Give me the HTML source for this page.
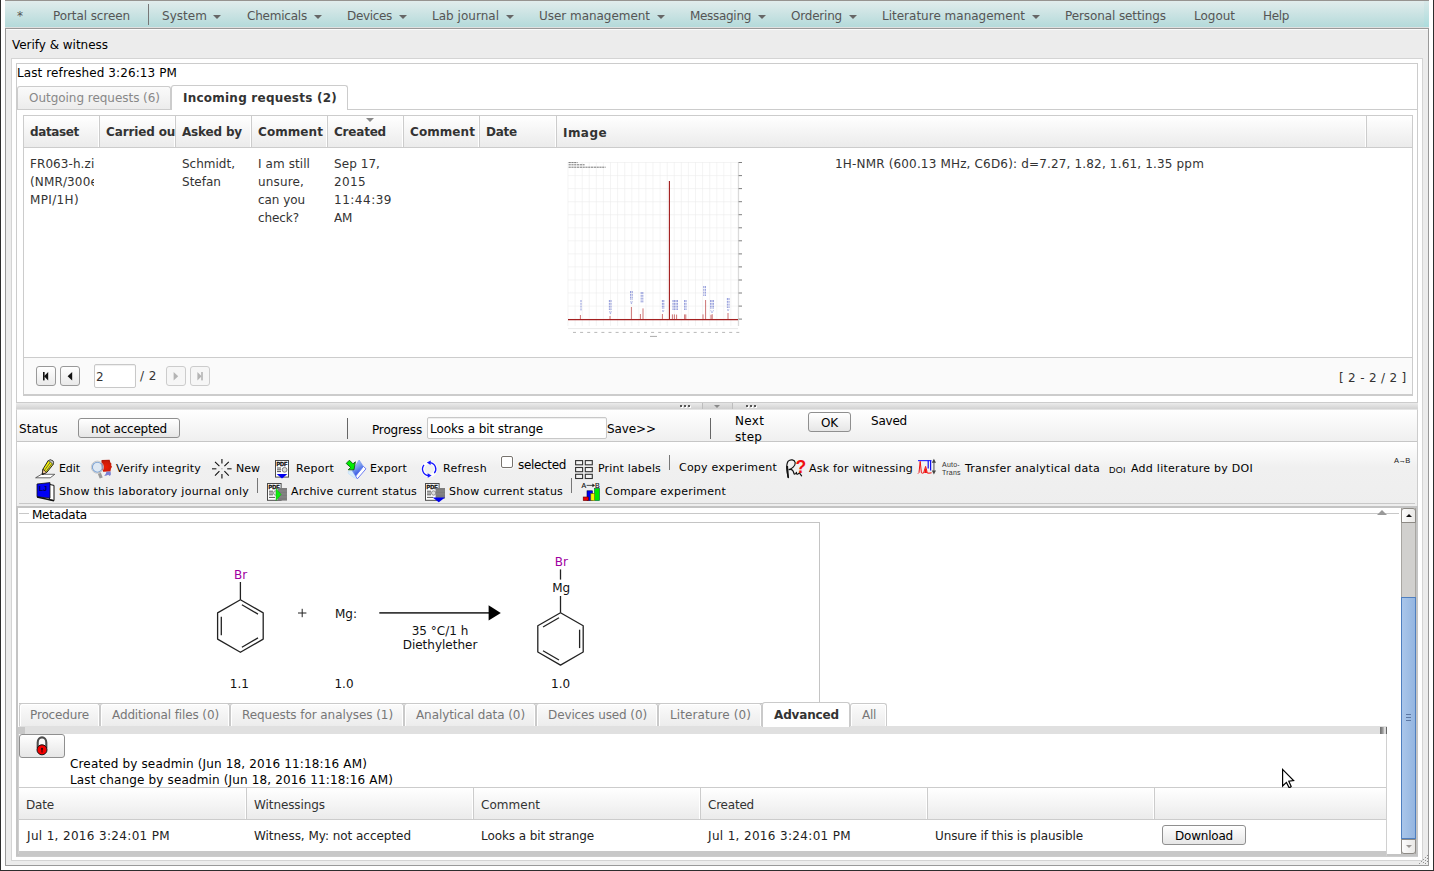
<!DOCTYPE html>
<html lang="en"><head>
<meta charset="utf-8">
<title>Verify &amp; witness</title>
<style>
html,body{margin:0;padding:0;}
body{width:1434px;height:871px;position:relative;overflow:hidden;background:#fff;
 font-family:"DejaVu Sans","Liberation Sans",sans-serif;font-size:12px;line-height:15px;color:#000;}
.a{position:absolute;}
.t{position:absolute;white-space:nowrap;line-height:15px;height:15px;}
svg{position:absolute;overflow:visible;}
/* frame */
#edgeL{left:0;top:0;width:1px;height:871px;background:#2d2d2d;}
#edgeR{left:1433px;top:0;width:1px;height:871px;background:#2d2d2d;}
#edgeB{left:0;top:870px;width:1434px;height:1px;background:#2d2d2d;}
#edgeT{left:5px;top:0;width:1424px;height:1px;background:#969390;}
/* menu */
#menu{left:5px;top:1px;width:1424px;height:26px;background:linear-gradient(#e1ecec,#b4dada);}
#menu .t{color:#555;top:8px;}
#menu .ar{position:absolute;top:14px;width:0;height:0;border-left:4px solid transparent;border-right:4px solid transparent;border-top:4px solid #666;}
#menuline{left:5px;top:27px;width:1424px;height:1px;background:#e0e0e0;}
/* main panel */
#main{left:5px;top:28px;width:1422px;height:836px;border:1px solid #999;background:#ececec;box-shadow:inset 0 1px 0 #fbfbfb;}
#cont{left:11px;top:58px;width:1410px;height:801px;border:1px solid #d4d4d4;background:#fff;}
#upper{left:16px;top:63px;width:1400px;height:338px;border:1px solid #ccc;background:#fff;}
#split{left:16px;top:403px;width:1402px;height:6px;background:linear-gradient(#ebebeb,#d2d2d2);}
#lower{left:16px;top:409px;width:1400px;height:446px;border:1px solid #ccc;border-top:1px solid #e4e4e4;background:#fff;}
/* tabs */
.tab{position:absolute;box-sizing:border-box;border:1px solid #ccc;border-bottom:none;border-radius:3px 3px 0 0;background:linear-gradient(#fafafa,#ececec);color:#888;white-space:nowrap;}
.tab.on{background:#fff;color:#333;font-weight:bold;}
.tab span{position:absolute;line-height:15px;}
/* grid */
#grid{left:23px;top:115px;width:1388px;height:279px;border:1px solid #ccc;background:#fff;}
#ghead{left:24px;top:116px;width:1388px;height:31px;background:linear-gradient(#fff,#ebebeb);border-bottom:1px solid #ccc;}
.hc{position:absolute;top:0;height:31px;border-right:1px solid #ccc;box-shadow:inset -1px 0 0 #fff;box-sizing:border-box;overflow:hidden;white-space:nowrap;font-weight:bold;color:#333;}
.hc span{position:absolute;left:6px;top:9px;line-height:15px;}
.ln{display:block;white-space:nowrap;}
.cell{position:absolute;overflow:hidden;white-space:nowrap;color:#333;line-height:18px;}
#pager{left:24px;top:357px;width:1388px;height:36px;border-top:1px solid #ccc;border-bottom:1px solid #ccc;background:#fafafa;}
.pb{position:absolute;box-sizing:border-box;width:20px;height:20px;border:1px solid #999;border-radius:3px;background:linear-gradient(#fff,#e9e9e9);}
.pb.dis{border-color:#ccc;background:#f6f6f6;}
.btn{position:absolute;box-sizing:border-box;border:1px solid #8f8f8f;border-radius:3px;background:linear-gradient(#fff,#e6e6e6);text-align:center;white-space:nowrap;}
.inp{position:absolute;box-sizing:border-box;border:1px solid #c8c8c8;border-radius:2px;background:#fff;box-shadow:inset 0 1px 1px #eee;white-space:nowrap;overflow:hidden;}
#status{left:17px;top:410px;width:1400px;height:31px;background:linear-gradient(#fff,#efefef);border-bottom:1px solid #c6c6c6;}
#tbar{left:17px;top:442px;width:1400px;height:64px;background:linear-gradient(#fff 0,#f0f0f0 40%,#eee 100%);}

#tbar .t{top:0}
.tb{position:absolute;white-space:nowrap;line-height:15px;height:15px;font-size:11px;letter-spacing:0.22px;}
.sep{position:absolute;width:1px;height:15px;background:#777;}
#scroll{left:18px;top:508px;width:1383px;height:346px;background:#fff;}
.tab2{position:absolute;box-sizing:border-box;top:703px;height:23px;border:1px solid #cacaca;border-bottom:none;border-radius:3px 3px 0 0;background:linear-gradient(#fbfbfb,#ececec);box-shadow:inset 1px 1px 0 #fff,inset -1px 0 0 #fff;color:#777;white-space:nowrap;}
.tab2 span{position:absolute;left:11px;top:4px;line-height:15px;}
.tab2.on{background:#fff;box-shadow:none;color:#333;font-weight:bold;top:702px;height:25px;}
.tab2.on span{top:5px}
.th2{position:absolute;top:0;height:31px;box-sizing:border-box;border-right:1px solid #ccc;box-shadow:inset -1px 0 0 #fff;color:#333;}
.th2 span{position:absolute;left:7px;top:10px;line-height:15px;white-space:nowrap;}
.td2{position:absolute;top:829px;line-height:15px;white-space:nowrap;color:#222;}
</style>
</head>
<body>
<div class="a" id="edgeL"></div><div class="a" id="edgeR"></div><div class="a" id="edgeB"></div><div class="a" id="edgeT"></div>

<div class="a" id="menu">
 <span class="t" style="left: 12px; letter-spacing: 0px;">*</span>
 <span class="t" style="left: 48px; letter-spacing: -0.091px;">Portal screen</span>
 <div class="a" style="left:143px;top:3px;width:1px;height:21px;background:#777"></div>
 <span class="t" style="left: 157px; letter-spacing: 0.042px;">System</span><i class="ar" style="left:208px"></i>
 <span class="t" style="left: 242px; letter-spacing: -0.215px;">Chemicals</span><i class="ar" style="left:309px"></i>
 <span class="t" style="left: 342px; letter-spacing: -0.328px;">Devices</span><i class="ar" style="left:394px"></i>
 <span class="t" style="left: 427px; letter-spacing: 0.02px;">Lab journal</span><i class="ar" style="left:501px"></i>
 <span class="t" style="left: 534px; letter-spacing: -0.037px;">User management</span><i class="ar" style="left:652px"></i>
 <span class="t" style="left: 685px; letter-spacing: -0.309px;">Messaging</span><i class="ar" style="left:753px"></i>
 <span class="t" style="left: 786px; letter-spacing: -0.209px;">Ordering</span><i class="ar" style="left:844px"></i>
 <span class="t" style="left: 877px; letter-spacing: 0.001px;">Literature management</span><i class="ar" style="left:1027px"></i>
 <span class="t" style="left: 1060px; letter-spacing: -0.099px;">Personal settings</span>
 <span class="t" style="left: 1189px; letter-spacing: -0.016px;">Logout</span>
 <span class="t" style="left: 1258px; letter-spacing: -0.34px;">Help</span>
 <div class="a" style="left:1419px;top:0;width:5px;height:26px;background:linear-gradient(#d8e8e8,#acdcdc)"></div>
</div>
<div class="a" id="menuline"></div>

<div class="a" id="main"></div>
<span class="t" style="left: 12px; top: 38px; letter-spacing: -0.023px;">Verify &amp; witness</span>
<div class="a" id="cont"></div>
<div class="a" id="upper"></div>
<div class="a" id="split"></div>
<div class="a" style="left:702px;top:403px;width:29px;height:6px;border-left:1px solid #bdbdbd;border-right:1px solid #bdbdbd;background:linear-gradient(#e4e4e4,#cfcfcf)"></div>
<div class="a" style="left:680px;top:405px;width:2px;height:2px;background:#555;box-shadow:4px 0 0 #555,8px 0 0 #555,1px 1px 0 #fff,5px 1px 0 #fff,9px 1px 0 #fff"></div>
<div class="a" style="left:746px;top:405px;width:2px;height:2px;background:#555;box-shadow:4px 0 0 #555,8px 0 0 #555,1px 1px 0 #fff,5px 1px 0 #fff,9px 1px 0 #fff"></div>
<div class="a" style="left:714px;top:405px;width:0;height:0;border-left:3.5px solid transparent;border-right:3.5px solid transparent;border-top:3.5px solid #888"></div>
<div class="a" id="lower"></div>

<!-- upper: refreshed + tabs -->
<span class="t" style="left: 17px; top: 66px; letter-spacing: 0.101px;">Last refreshed 3:26:13 PM</span>
<div class="a" style="left:17px;top:109px;width:1400px;height:1px;background:#ccc"></div>
<div class="tab" style="left:17px;top:86px;width:154px;height:23px"><span style="left: 11px; top: 4px; letter-spacing: -0.036px;">Outgoing requests (6)</span></div>
<div class="tab on" style="left:171px;top:85px;width:177px;height:25px"><span style="left: 11px; top: 5px; letter-spacing: 0.231px;">Incoming requests (2)</span></div>

<!-- grid -->
<div class="a" id="grid"></div>
<div class="a" id="ghead">
 <div class="hc" style="left:0;width:76px"><span style="letter-spacing: -0.364px;">dataset</span></div>
 <div class="hc" style="left:76px;width:76px"><span style="letter-spacing: -0.134px;">Carried out by</span></div>
 <div class="hc" style="left:152px;width:76px"><span style="letter-spacing: -0.176px;">Asked by</span></div>
 <div class="hc" style="left:228px;width:76px"><span style="letter-spacing: 0.074px;">Comment</span></div>
 <div class="hc" style="left:304px;width:76px"><span style="letter-spacing: -0.205px;">Created</span></div>
 <div class="hc" style="left:380px;width:76px"><span style="letter-spacing: 0.074px;">Comment</span></div>
 <div class="hc" style="left:456px;width:77px"><span style="letter-spacing: -0.234px;">Date</span></div>
 <div class="hc" style="left:533px;width:810px"><span style="top: 10px; letter-spacing: 0.441px;">Image</span></div>
</div>
<div class="a" style="left:366px;top:118px;width:0;height:0;border-left:4px solid transparent;border-right:4px solid transparent;border-top:4px solid #888"></div>

<div class="cell" style="left:30px;top:155px;width:64px"><span class="ln" style="letter-spacing: 0.077px;">FR063-h.zip</span><span class="ln" style="letter-spacing: 0.138px;">(NMR/300er</span><span class="ln" style="letter-spacing: 0.355px;">MPI/1H)</span></div>
<div class="cell" style="left:182px;top:155px;width:64px"><span class="ln" style="letter-spacing: 0.002px;">Schmidt,</span><span class="ln" style="letter-spacing: 0.018px;">Stefan</span></div>
<div class="cell" style="left:258px;top:155px;width:64px"><span class="ln" style="letter-spacing: 0.083px;">I am still</span><span class="ln" style="letter-spacing: 0.152px;">unsure,</span><span class="ln" style="letter-spacing: -0.06px;">can you</span><span class="ln" style="letter-spacing: -0.086px;">check?</span></div>
<div class="cell" style="left:334px;top:155px;width:66px"><span class="ln" style="letter-spacing: 0.069px;">Sep 17,</span><span class="ln" style="letter-spacing: 0.363px;">2015</span><span class="ln" style="letter-spacing: 0.512px;">11:44:39</span><span class="ln" style="letter-spacing: -0.281px;">AM</span></div>
<div class="cell" style="left:835px;top:155px;width:500px;letter-spacing:0.14px"><span class="ln" style="letter-spacing: 0.166px;">1H-NMR (600.13 MHz, C6D6): d=7.27, 1.82, 1.61, 1.35 ppm</span></div>

<svg style="left:567px;top:160px" width="180" height="180" viewBox="0 0 180 180">
<path d="M1.0 2 V166 M8.1 2 V166 M15.2 2 V166 M22.2 2 V166 M29.3 2 V166 M36.4 2 V166 M43.5 2 V166 M50.6 2 V166 M57.7 2 V166 M64.8 2 V166 M71.8 2 V166 M78.9 2 V166 M86.0 2 V166 M93.1 2 V166 M100.2 2 V166 M107.2 2 V166 M114.3 2 V166 M121.4 2 V166 M128.5 2 V166 M135.6 2 V166 M142.7 2 V166 M149.8 2 V166 M156.8 2 V166 M163.9 2 V166 M171.0 2 V166 M1 2.5 H171 M1 15.6 H171 M1 28.6 H171 M1 41.7 H171 M1 54.7 H171 M1 67.8 H171 M1 80.8 H171 M1 93.9 H171 M1 106.9 H171 M1 120.0 H171 M1 133.0 H171 M1 146.1 H171 M1 159.1 H171 " stroke="#ececec" stroke-width="0.6" fill="none"></path>
<path d="M171.6 2 V166" stroke="#c8c8c8" stroke-width="0.7"></path>
<path d="M171.6 2.5 H175 M171.6 15.6 H175 M171.6 28.6 H175 M171.6 41.7 H175 M171.6 54.7 H175 M171.6 67.8 H175 M171.6 80.8 H175 M171.6 93.9 H175 M171.6 106.9 H175 M171.6 120.0 H175 M171.6 133.0 H175 M171.6 146.1 H175 M171.6 159.1 H175 " stroke="#707070" stroke-width="0.9"></path>
<path d="M6.0 172.4 h3 M13.1 172.4 h3 M20.2 172.4 h3 M27.3 172.4 h3 M34.4 172.4 h3 M41.5 172.4 h3 M48.6 172.4 h3 M55.7 172.4 h3 M62.8 172.4 h3 M69.9 172.4 h3 M77.0 172.4 h3 M84.1 172.4 h3 M91.2 172.4 h3 M98.3 172.4 h3 M105.4 172.4 h3 M112.5 172.4 h3 M119.6 172.4 h3 M126.7 172.4 h3 M133.8 172.4 h3 M140.9 172.4 h3 M148.0 172.4 h3 M155.1 172.4 h3 M162.2 172.4 h3 M169.3 172.4 h3 " stroke="#b8b8b8" stroke-width="1"></path>
<path d="M83 176.4 h7" stroke="#aaa" stroke-width="1"></path>
<path d="M1.6 2.6 h9 M1.6 4.8 h16 M1.6 7.2 h37" stroke="#777" stroke-width="1" stroke-dasharray="2.2 0.6"></path>
<path d="M1 159.6 H171" stroke="#a42020" stroke-width="1.25"></path>
<path d="M1 168.6 H171" stroke="#e0e0e0" stroke-width="0.7"></path>
<path d="M102.4 159 V21" stroke="#a01818" stroke-width="1.1"></path>
<path d="M13.4 159 V155.0 M43.0 159 V156.0 M64.4 159 V147.0 M73.4 159 V154.0 M76.0 159 V148.4 M95.4 159 V154.0 M105.4 159 V154.4 M107.4 159 V154.4 M109.6 159 V154.6 M117.6 159 V154.4 M118.8 159 V154.4 M136.0 159 V154.4 M138.6 159 V140.0 M144.0 159 V154.8 M145.2 159 V154.2 M161.0 159 V153.0 " stroke="#c05050" stroke-width="0.8"></path>
<path d="M14.0 140 V151 M42.4 140 V150 M44.0 140 V150 M63.6 131 V140 M65.2 131 V140 M74.2 132 V143 M75.8 132 V143 M95.4 140 V149 M96.8 140 V149 M106.0 140 V150 M107.4 140 V150 M109.0 140 V150 M110.4 140 V150 M117.6 140 V150 M119.0 140 V150 M136.8 126 V136 M138.4 126 V136 M143.6 140 V149 M145.0 140 V149 M146.4 140 V149 M160.4 138 V148 M162.0 138 V148 " stroke="#5a68c8" stroke-width="0.9" stroke-dasharray="2 0.8" opacity="0.75"></path>
<path d="M42.4 151 L43.4 154 L44.4 151 M63.6 141 L64.4 144 L65.4 141 M95.4 150 L96 152 L97 150 M143.6 150 L145 153 L146.6 150 M160.4 149 L161 151 L162 149" stroke="#7a86d4" stroke-width="0.6" fill="none" opacity="0.8"></path>
</svg>

<div class="a" id="pager">
 <div class="pb" style="left:12px;top:8px"></div>
 <div class="pb" style="left:36px;top:8px"></div>
 <div class="inp" style="left:70px;top:6px;width:42px;height:24px"><span class="t" style="left: 1px; top: 5px; color: rgb(51, 51, 51); letter-spacing: 0.359px;">2</span></div>
 <span class="t" style="left: 116px; top: 11px; color: rgb(51, 51, 51); letter-spacing: 0.5px;">/ 2</span>
 <div class="pb dis" style="left:142px;top:8px"></div>
 <div class="pb dis" style="left:166px;top:8px"></div>
<svg style="left:12px;top:8px" width="20" height="20" viewBox="0 0 20 20"><rect x="7" y="6" width="1.6" height="8.4" fill="#111"></rect><path d="M12.2 6 L8 10.2 L12.2 14.4 Z" fill="#111"></path></svg>
 <svg style="left:36px;top:8px" width="20" height="20" viewBox="0 0 20 20"><path d="M12.2 6 L7.6 10.2 L12.2 14.4 Z" fill="#111"></path></svg>
 <svg style="left:142px;top:8px" width="20" height="20" viewBox="0 0 20 20"><path d="M7.6 6 L12.2 10.2 L7.6 14.4 Z" fill="#b4b4b4"></path></svg>
 <svg style="left:166px;top:8px" width="20" height="20" viewBox="0 0 20 20"><path d="M7.4 6 L11.6 10.2 L7.4 14.4 Z" fill="#b4b4b4"></path><rect x="11.2" y="6" width="1.6" height="8.4" fill="#b4b4b4"></rect></svg>
 <span class="t nols" style="left:1315px;top:13px;color:#333;letter-spacing:0.3px">[ 2 - 2 / 2 ]</span>
</div>

<!-- status row -->
<div class="a" id="status"></div>
<span class="t" style="left: 19px; top: 422px; letter-spacing: 0.125px;">Status</span>
<div class="btn" style="left: 78px; top: 418px; width: 102px; height: 20px; line-height: 20px; letter-spacing: -0.228px;">not accepted</div>
<div class="a" style="left:347px;top:418px;width:1px;height:21px;background:#666"></div>
<span class="t" style="left: 372px; top: 423px; letter-spacing: -0.152px;">Progress</span>
<div class="inp" style="left:427px;top:417px;width:180px;height:22px"><span class="t" style="left: 2px; top: 4px; letter-spacing: -0.088px;">Looks a bit strange</span></div>
<span class="t" style="left: 607px; top: 422px; letter-spacing: -0.096px;">Save&gt;&gt;</span>
<div class="a" style="left:710px;top:418px;width:1px;height:21px;background:#666"></div>
<span class="t" style="left: 735px; top: 413px; line-height: 16px; white-space: normal; width: 40px; height: 32px; z-index: 3; letter-spacing: 0.34px;">Next step</span>
<div class="btn" style="left: 808px; top: 412px; width: 43px; height: 20px; line-height: 20px; letter-spacing: -0.164px;">OK</div>
<span class="t" style="left: 871px; top: 414px; letter-spacing: -0.216px;">Saved</span>

<!-- toolbar -->
<div class="a" id="tbar"></div>

<!-- toolbar row 1 -->
<span class="tb" style="left: 59px; top: 461px; letter-spacing: -0.078px;">Edit</span>
<span class="tb" style="left: 116px; top: 461px; letter-spacing: 0.237px;">Verify integrity</span>
<span class="tb" style="left: 236px; top: 461px; letter-spacing: 0px;">New</span>
<span class="tb" style="left: 296px; top: 461px; letter-spacing: 0.255px;">Report</span>
<span class="tb" style="left: 370px; top: 461px; letter-spacing: 0.164px;">Export</span>
<span class="tb" style="left: 443px; top: 461px; letter-spacing: 0.35px;">Refresh</span>
<div class="a" style="left:501px;top:456px;width:10px;height:10px;border:1px solid #77736e;border-radius:2px;background:#fff;box-shadow:0 0 0 1px rgba(255,255,255,0.6)"></div>
<span class="t" style="left: 518px; top: 458px; letter-spacing: -0.332px;">selected</span>
<span class="tb" style="left: 598px; top: 461px; letter-spacing: 0.155px;">Print labels</span>
<div class="sep" style="left:669px;top:455px"></div>
<span class="tb" style="left: 679px; top: 460px; letter-spacing: 0.227px;">Copy experiment</span>
<span class="tb" style="left: 809px; top: 461px; letter-spacing: 0.204px;">Ask for witnessing</span>
<span class="tb" style="left:942px;top:461px;font-family:'Liberation Sans',sans-serif;font-size:7px;line-height:8px;height:16px;color:#333;text-align:left">Auto-<br>Trans</span>
<span class="tb" style="left: 965px; top: 461px; letter-spacing: 0.24px;">Transfer analytical data</span>
<span class="tb" style="left:1109px;top:463px;font-size:9px;font-family:'Liberation Sans',sans-serif">DOI</span>
<span class="tb" style="left: 1131px; top: 461px; letter-spacing: 0.264px;">Add literature by DOI</span>
<span class="tb" style="left:1394px;top:453px;font-size:7.5px;font-family:'Liberation Sans',sans-serif;color:#222;letter-spacing:-0.6px">A→B</span>
<!-- toolbar row 2 -->
<span class="tb" style="left: 59px; top: 484px; letter-spacing: 0.251px;">Show this laboratory journal only</span>
<div class="sep" style="left:257px;top:478px"></div>
<span class="tb" style="left: 291px; top: 484px; letter-spacing: 0.198px;">Archive current status</span>
<span class="tb" style="left: 449px; top: 484px; letter-spacing: 0.202px;">Show current status</span>
<div class="sep" style="left:571px;top:478px"></div>
<span class="tb" style="left: 605px; top: 484px; letter-spacing: 0.246px;">Compare experiment</span>

<!-- pencil / edit -->
<svg style="left:34px;top:458px" width="24" height="22" viewBox="0 0 24 22">
 <path d="M1.6 19.8 L7.5 16.3 L20.8 16.3 L16.2 19.8 Z" fill="#fff" stroke="#444" stroke-width="0.8"></path>
 <path d="M14.2 2.6 Q16.6 1.2 18.9 2.9 Q20.2 4.6 19 6.6 L12.8 14.4 L8.2 16.6 L8.9 11.3 Z" fill="#f6f200" stroke="#222" stroke-width="1"></path>
 <path d="M10.6 12.2 L16.4 4.2 M12.2 13.4 L18 5.4" stroke="#555" stroke-width="0.9" fill="none"></path>
 <path d="M8.2 16.6 L8.9 11.3 L12.8 14.4 Z" fill="#f4c89a" stroke="#222" stroke-width="0.8"></path>
 <path d="M8.2 16.6 L8.5 14.4 L10 15.6 Z" fill="#111"></path>
 <path d="M14.2 2.6 Q16.6 1.2 18.9 2.9 Q20.2 4.6 19 6.6 L17.9 5.2 Q16.6 3.6 15 3.6 Z" fill="#c8c8c8" stroke="#333" stroke-width="0.6"></path>
</svg>
<!-- verify integrity -->
<svg style="left:90px;top:458px" width="24" height="22" viewBox="0 0 24 22">
 <defs><radialGradient id="gseal" cx="0.45" cy="0.6" r="0.7"><stop offset="0" stop-color="#ee1c04"></stop><stop offset="0.7" stop-color="#c81a08"></stop><stop offset="1" stop-color="#a01404"></stop></radialGradient></defs>
 <path d="M11.6 2 L19.6 1.8 L20.4 4.6 L21.4 5.4 L21.2 7.4 L22 8.8 L21 10.6 L20.4 13.6 L13.2 13.8 L11 9 Z" fill="url(#gseal)"></path>
 <path d="M16.4 13.8 L20.6 13.6 L20.9 16.4 L19.8 18 L18.2 16.8 L16.6 17.6 L14.2 18 L15.8 15.8 Z" fill="#7a80d2"></path>
 <circle cx="7.4" cy="9.2" r="6.1" fill="none" stroke="#c4c4c4" stroke-width="0.9"></circle>
 <circle cx="7.4" cy="9.2" r="5" fill="#d9e5f3" fill-opacity="0.82" stroke="#7ea4d4" stroke-width="1.1"></circle>
 <path d="M9.4 15.4 L11.2 20" stroke="#9a9a9a" stroke-width="3.2" stroke-linecap="butt"></path>
 <path d="M8.2 14.6 L10.4 14.6" stroke="#bbb" stroke-width="1.4"></path>
</svg>
<!-- new -->
<svg style="left:211px;top:458px" width="22" height="22" viewBox="0 0 22 22">
 <g stroke="#555" stroke-width="1.6"><path d="M1 10.7 H5.4 M16.2 10.7 H20.6 M10.9 1 V5.4 M10.9 16 V20.6"></path></g>
 <g stroke="#111" stroke-width="1.1"><path d="M4 3.8 L8.4 8.2 M17.8 3.8 L13.4 8.2 M4 17.6 L8.4 13.2 M17.8 17.6 L13.4 13.2"></path></g>
 <rect x="10.2" y="10" width="1.4" height="1.4" fill="#bbb"></rect>
</svg>
<!-- report pdf -->
<svg style="left:274px;top:459px" width="17" height="21" viewBox="0 0 17 21">
 <rect x="1.5" y="1.5" width="13" height="16.6" fill="#fff" stroke="#4a4a4a" stroke-width="1"></rect>
 <text x="2.4" y="6.6" font-family="Liberation Sans, sans-serif" font-size="5.4" font-weight="bold" fill="#111" stroke="#111" stroke-width="0.35" textLength="11" lengthAdjust="spacingAndGlyphs">PDF</text>
 <path d="M3 9 H7 M3 10.8 H7 M3 12.6 H7" stroke="#2a2a2a" stroke-width="0.8"></path>
 <circle cx="10.6" cy="10.8" r="2.4" fill="#ddd" stroke="#666" stroke-width="0.8"></circle>
 <path d="M2.6 15 H13.4 L8 19.6 Z" fill="#0000f0"></path>
</svg>
<!-- export -->
<svg style="left:344px;top:458px" width="24" height="22" viewBox="0 0 24 22">
 <defs><linearGradient id="gex" x1="0.2" y1="0" x2="0.7" y2="1"><stop offset="0" stop-color="#c4d8f6"></stop><stop offset="0.45" stop-color="#7a9cec"></stop><stop offset="1" stop-color="#1a3ae0"></stop></linearGradient></defs>
 <path d="M4 13.4 L8.2 12.7 L13.4 20.8 L9.6 19.4 L4.4 15.6 Z" fill="#d6eefc" stroke="#b8d4f8" stroke-width="0.5"></path>
 <path d="M19.4 8.4 L22 10.8 L13.4 20.8 L11.6 18 Z" fill="#fff" stroke="#5c6ef4" stroke-width="0.9" stroke-linejoin="round"></path>
 <path d="M15.1 2 L19.4 8.4 L11.6 18 L8.2 12.7 Z" fill="url(#gex)" stroke="#6a86f0" stroke-width="0.5"></path>
 <path d="M2.2 5.4 L5.4 2.2 L9 5.8 L11.4 3.8 L10 11.8 L4.2 11.8 L6.6 9.4 Z" fill="#00ee00" stroke="#0a4a0a" stroke-width="0.8" stroke-linejoin="round"></path>
</svg>
<!-- refresh -->
<svg style="left:419px;top:458px" width="22" height="22" viewBox="0 0 22 22">
 <circle cx="10.2" cy="11.1" r="6.5" fill="none" stroke="#fff" stroke-width="3.4" opacity="0.9"></circle>
 <path d="M11.2 4.6 A6.5 6.5 0 0 1 15.3 15.2" fill="none" stroke="#1414ff" stroke-width="1.3"></path>
 <path d="M9.2 17.6 A6.5 6.5 0 0 1 5 7" fill="none" stroke="#1414ff" stroke-width="1.3"></path>
 <path d="M7.8 4.6 L11.8 2.4 L11.6 7 Z" fill="#1414ff"></path>
 <path d="M12.6 17.6 L8.6 15.2 L8.8 19.8 Z" fill="#1414ff"></path>
</svg>
<!-- print labels -->
<svg style="left:574px;top:459px" width="20" height="21" viewBox="0 0 20 21">
 <g fill="#f4f4f4" stroke="#333" stroke-width="1.1">
 <rect x="1.6" y="1.6" width="7" height="4.2"></rect><rect x="11.3" y="1.6" width="7" height="4.2"></rect>
 <rect x="1.6" y="8.5" width="7" height="4.2"></rect><rect x="11.3" y="8.5" width="7" height="4.2"></rect>
 <rect x="1.6" y="15.3" width="7" height="4.2"></rect><rect x="11.3" y="15.3" width="7" height="4.2"></rect>
 </g>
</svg>
<!-- ask for witnessing -->
<svg style="left:785px;top:458px" width="22" height="22" viewBox="0 0 22 22">
 <path d="M3.4 19.6 C1.4 14 1 6 3.2 3.2 C5.4 1 9.6 1.4 10.2 4.6 C10.6 8 6.6 10.8 4 11.6 C6.4 11 8.2 12.6 8.8 15 C9.2 16.6 10.6 16.4 11.4 14.4 C11.2 16 12 16.8 13.2 15.8 C14 15.2 14.4 14.6 14.6 15.2 L16.6 17.8" fill="none" stroke="#111" stroke-width="1.15" stroke-linecap="round" stroke-linejoin="round"></path>
 <path d="M3.2 19.8 L2.2 8" stroke="#111" stroke-width="1.7" fill="none"></path>
 <text x="10.6" y="15" font-family="Liberation Sans, sans-serif" font-size="17.5" font-weight="bold" fill="#ee1010">?</text>
</svg>
<!-- transfer -->
<svg style="left:917px;top:458px" width="21" height="19" viewBox="0 0 21 19">
 <path d="M1 2.6 H14.4" stroke="#3030ff" stroke-width="1.2"></path>
 <path d="M11.2 2.6 V10.4 M13.6 2.6 V12.4" stroke="#1010f0" stroke-width="1.2"></path>
 <path d="M1 15.6 L2 14.6 L3.2 3.4 L4.4 14.8 L5.4 15.2 L6.6 15 L7.8 11 L8.6 8.4 L9.6 12 L10.2 15 L12 15.2 L14.6 14.8" fill="none" stroke="#f01010" stroke-width="1"></path>
 <path d="M7.2 15 L8.6 9.4 L10 15 Z" fill="#f01010"></path>
 <path d="M16.9 3.6 V13.4" stroke="#999" stroke-width="1.8"></path>
 <path d="M14.8 4.8 L16.9 0.8 L19 4.8 Z M14.8 12.4 L16.9 16.4 L19 12.4 Z" fill="#444"></path>
</svg>
<!-- LJ book -->
<svg style="left:35px;top:481px" width="21" height="21" viewBox="0 0 21 21">
 <path d="M14.4 3.4 L19 4.4 L19 19.6 L14.4 18.6 Z" fill="#fff" stroke="#111" stroke-width="1"></path>
 <path d="M2 3 L15 1.6 L15 17.2 L2 15.8 Z" fill="#0000f4" stroke="#111" stroke-width="0.8"></path>
 <path d="M2 16 L19 19.8" stroke="#111" stroke-width="1.4"></path>
 <text x="4" y="10.4" font-family="Liberation Sans, sans-serif" font-size="7.5" font-weight="bold" fill="#00004a" textLength="8" lengthAdjust="spacingAndGlyphs">LJ</text>
</svg>
<!-- archive pdf -->
<svg style="left:266px;top:482px" width="23" height="21" viewBox="0 0 23 21">
 <rect x="1.5" y="1.5" width="13.6" height="16.8" fill="#fff" stroke="#4a4a4a" stroke-width="1"></rect>
 <text x="2.6" y="6.6" font-family="Liberation Sans, sans-serif" font-size="5.4" font-weight="bold" fill="#111" stroke="#111" stroke-width="0.35" textLength="11" lengthAdjust="spacingAndGlyphs">PDF</text>
 <path d="M3 9.2 H7 M3 11 H7 M3 12.8 H7 M3 15.4 H9" stroke="#2a2a2a" stroke-width="0.8"></path>
 <circle cx="9.6" cy="11" r="2.2" fill="#ddd" stroke="#777" stroke-width="0.7"></circle>
 <rect x="11.6" y="6" width="9.4" height="12.6" fill="#7c7c7c"></rect>
 <path d="M12 9 H21 M12 12 H21 M12 15 H21" stroke="#8e8e8e" stroke-width="0.8"></path>
 <path d="M10 6.4 L15.2 12.4 L10 18.6 Z" fill="#10e810" stroke="#0a0" stroke-width="0.4"></path>
</svg>
<!-- show pdf -->
<svg style="left:424px;top:482px" width="23" height="21" viewBox="0 0 23 21">
 <rect x="1.5" y="1.5" width="13.6" height="16.8" fill="#fff" stroke="#4a4a4a" stroke-width="1"></rect>
 <text x="2.6" y="6.6" font-family="Liberation Sans, sans-serif" font-size="5.4" font-weight="bold" fill="#111" stroke="#111" stroke-width="0.35" textLength="11" lengthAdjust="spacingAndGlyphs">PDF</text>
 <path d="M3 9.2 H7 M3 11 H7 M3 12.8 H7 M3 15.4 H9" stroke="#2a2a2a" stroke-width="0.8"></path>
 <circle cx="9.6" cy="11" r="2.2" fill="#ddd" stroke="#777" stroke-width="0.7"></circle>
 <rect x="11.6" y="6" width="9.4" height="10.6" fill="#7c7c7c"></rect>
 <path d="M12 9 H21 M12 12 H21" stroke="#8e8e8e" stroke-width="0.8"></path>
 <path d="M8.6 15.6 H21 L14.8 20.2 Z" fill="#0000f0"></path>
</svg>
<!-- compare -->
<svg style="left:581px;top:481px" width="21" height="21" viewBox="0 0 21 21">
 <text x="0.6" y="6.8" font-family="Liberation Sans, sans-serif" font-size="7" fill="#111" stroke="#111" stroke-width="0.15">A</text>
 <text x="14" y="6.8" font-family="Liberation Sans, sans-serif" font-size="7" fill="#111" stroke="#111" stroke-width="0.15">B</text>
 <path d="M5.6 4.4 H12.4" stroke="#222" stroke-width="0.8"></path><path d="M11.4 2.6 L14 4.4 L11.4 6.2 Z" fill="#222"></path>
 <rect x="13.4" y="7.4" width="5.2" height="12.2" fill="#00e800" stroke="#064" stroke-width="0.6"></rect>
 <rect x="6" y="9.8" width="5.4" height="9.8" fill="#0000f0" stroke="#004" stroke-width="0.6"></rect>
 <rect x="9.8" y="12.6" width="3.8" height="7" fill="#f8f800" stroke="#660" stroke-width="0.6"></rect>
 <rect x="2.2" y="16" width="5.2" height="3.6" fill="#f00000" stroke="#600" stroke-width="0.6"></rect>
</svg>


<!-- lower scroll area -->
<div class="a" style="left:19px;top:503px;width:1396px;height:1px;background:#c8c8c8"></div>
<div class="a" style="left:16px;top:506px;width:1402px;height:2px;background:#c4c4c4"></div>
<div class="a" style="left:16px;top:506px;width:2px;height:350px;background:#c4c4c4"></div>
<div class="a" style="left:1416px;top:506px;width:2px;height:350px;background:#c4c4c4"></div>
<div class="a" style="left:16px;top:854px;width:1402px;height:2px;background:#c4c4c4"></div>
<div class="a" id="scroll"></div>
<!-- fieldset -->
<div class="a" style="left:19px;top:513px;width:1380px;height:1px;background:#c8c8c8"></div>
<span class="t" style="left: 29px; top: 508px; background: rgb(255, 255, 255); padding: 0px 3px; height: 12px; letter-spacing: -0.229px;">Metadata</span>
<div class="a" style="left:1377px;top:510px;width:0;height:0;border-left:5px solid transparent;border-right:5px solid transparent;border-bottom:5px solid #999"></div>
<!-- reaction box -->
<div class="a" style="left:19px;top:522px;width:800px;height:180px;border-top:1px solid #c4c4c4;border-right:1px solid #c4c4c4;border-bottom:1px solid #c4c4c4;background:#fff"></div>
<svg style="left:0;top:0" width="1434" height="871" viewBox="0 0 1434 871" font-family="DejaVu Sans, Liberation Sans, sans-serif" font-size="12">
<path d="M240.4 599.7 L263.2 612.9 L263.2 639.1 L240.4 652.3 L217.6 639.1 L217.6 612.9 Z" fill="none" stroke="#222" stroke-width="1.3" stroke-linejoin="round"></path><line x1="241.9" y1="604.8" x2="258.0" y2="614.1" stroke="#222" stroke-width="1.3"></line><line x1="258.0" y1="637.9" x2="241.9" y2="647.2" stroke="#222" stroke-width="1.3"></line><line x1="221.3" y1="635.3" x2="221.3" y2="616.7" stroke="#222" stroke-width="1.3"></line>
<line x1="240.4" y1="582" x2="240.4" y2="599.7" stroke="#222" stroke-width="1.3"></line>
<text x="234" y="579" fill="#a000a0">Br</text>
<path d="M298 613 H306.4 M302.2 608.8 V617.2" stroke="#222" stroke-width="1"></path>
<text x="335" y="618" fill="#111">Mg:</text>
<line x1="379.3" y1="612.9" x2="490" y2="612.9" stroke="#3a3a3a" stroke-width="1.8"></line>
<path d="M488.6 605.2 L500.8 612.9 L488.6 620.6 Z" fill="#000"></path>
<text x="440" y="635" fill="#111" text-anchor="middle">35 °C/1 h</text>
<text x="440" y="649.4" fill="#111" text-anchor="middle">Diethylether</text>
<text x="239.3" y="687.5" fill="#111" text-anchor="middle">1.1</text>
<text x="344" y="687.5" fill="#111" text-anchor="middle">1.0</text>
<path d="M560.5 612.7 L583.2 625.8 L583.2 652.0 L560.5 665.1 L537.8 652.0 L537.8 625.8 Z" fill="none" stroke="#222" stroke-width="1.3" stroke-linejoin="round"></path><line x1="579.6" y1="629.7" x2="579.6" y2="648.1" stroke="#222" stroke-width="1.3"></line><line x1="559.0" y1="660.0" x2="543.0" y2="650.8" stroke="#222" stroke-width="1.3"></line><line x1="543.0" y1="627.0" x2="559.0" y2="617.8" stroke="#222" stroke-width="1.3"></line>
<line x1="560.5" y1="596" x2="560.5" y2="612.7" stroke="#222" stroke-width="1.3"></line>
<line x1="560.5" y1="569.4" x2="560.5" y2="579.6" stroke="#222" stroke-width="1.3"></line>
<text x="554.8" y="565.8" fill="#a000a0">Br</text>
<text x="552.2" y="592" fill="#111">Mg</text>
<text x="560.6" y="687.5" fill="#111" text-anchor="middle">1.0</text>
</svg>

<!-- tabs 2 -->
<div class="a" style="left:19px;top:726px;width:1368px;height:8px;background:#e0e0e0"></div>
<div class="a" style="left:18px;top:727px;width:7px;height:7px;background:#c8c8c8"></div>
<div class="a" style="left:1380px;top:727px;width:7px;height:7px;background:linear-gradient(90deg,#707070 0,#8a8a8a 2px,#b4b4b4 3.5px,#dcdcdc 3.6px,#dcdcdc 6px,#666 6px)"></div>
<div class="tab2" style="left:19px;width:81px"><span style="left: 10px; letter-spacing: -0.144px;">Procedure</span></div>
<div class="tab2" style="left:100px;width:130px"><span style="letter-spacing: -0.12px;">Additional files (0)</span></div>
<div class="tab2" style="left:230px;width:174px"><span style="letter-spacing: -0.063px;">Requests for analyses (1)</span></div>
<div class="tab2" style="left:404px;width:132px"><span style="letter-spacing: -0.084px;">Analytical data (0)</span></div>
<div class="tab2" style="left:536px;width:122px"><span style="letter-spacing: -0.111px;">Devices used (0)</span></div>
<div class="tab2" style="left:658px;width:104px"><span style="letter-spacing: 0.102px;">Literature (0)</span></div>
<div class="tab2" style="left:850px;width:37px"><span style="letter-spacing: -0.297px;">All</span></div>
<div class="tab2 on" style="left:762px;width:88px"><span style="letter-spacing: -0.148px;">Advanced</span></div>

<div class="a" style="left:18px;top:734px;width:1px;height:120px;background:#cfcfcf"></div>
<!-- lock button -->
<div class="btn" style="left:19px;top:734px;width:46px;height:24px"></div>
<svg style="left:34px;top:735px" width="16" height="22" viewBox="0 0 16 22">
 <path d="M3.7 13 V7.6 C3.7 0.6 12.3 0.6 12.3 7.6 V13" fill="none" stroke="#4c4c4c" stroke-width="2.1"></path>
 <path d="M5.4 12 V7.6 C5.4 3 10.6 3 10.6 7.6 V12" fill="#fafafa" stroke="none"></path>
 <circle cx="8" cy="14.8" r="5" fill="#f40000" stroke="#111" stroke-width="1"></circle>
 <path d="M8 14 V17.4" stroke="#5a0000" stroke-width="1.3"></path><circle cx="8" cy="13.8" r="0.95" fill="#111"></circle>
</svg>
<span class="t" style="left: 70px; top: 757px; letter-spacing: 0.148px;">Created by seadmin (Jun 18, 2016 11:18:16 AM)</span>
<span class="t" style="left: 70px; top: 773px; letter-spacing: 0.146px;">Last change by seadmin (Jun 18, 2016 11:18:16 AM)</span>

<!-- witness table -->
<div class="a" style="left:19px;top:787px;width:1367px;height:31px;border-top:1px solid #ccc;border-bottom:1px solid #ccc;background:linear-gradient(#fff,#ebebeb)">
 <div class="th2" style="left:0;width:228px"><span style="letter-spacing: -0.172px;">Date</span></div>
 <div class="th2" style="left:228px;width:227px"><span style="letter-spacing: -0.087px;">Witnessings</span></div>
 <div class="th2" style="left:455px;width:227px"><span style="letter-spacing: 0.029px;">Comment</span></div>
 <div class="th2" style="left:682px;width:227px"><span style="letter-spacing: -0.214px;">Created</span></div>
 <div class="th2" style="left:909px;width:227px"><span></span></div>
 <div class="th2" style="left:1136px;width:231px;border-right:none;box-shadow:none"><span></span></div>
</div>
<div class="a" style="left:1386px;top:734px;width:1px;height:122px;background:#d0d0d0"></div>
<span class="td2" style="left: 27px; letter-spacing: 0.337px;">Jul 1, 2016 3:24:01 PM</span>
<span class="td2" style="left: 254px; letter-spacing: -0.037px;">Witness, My: not accepted</span>
<span class="td2" style="left: 481px; letter-spacing: -0.088px;">Looks a bit strange</span>
<span class="td2" style="left: 708px; letter-spacing: 0.337px;">Jul 1, 2016 3:24:01 PM</span>
<span class="td2" style="left: 935px; letter-spacing: -0.09px;">Unsure if this is plausible</span>
<div class="btn" style="left: 1162px; top: 825px; width: 84px; height: 20px; line-height: 20px; letter-spacing: -0.207px;">Download</div>
<div class="a" style="left:19px;top:851px;width:1367px;height:5px;background:#c8c8c8"></div>

<!-- scrollbar -->
<div class="a" style="left:1401px;top:508px;width:15px;height:346px;background:#d1d0ce;border-left:1px solid #a8a6a2;border-right:1px solid #a8a6a2;box-sizing:border-box"></div>
<div class="a" style="left:1401px;top:508px;width:15px;height:15px;box-sizing:border-box;border:1px solid #8d8a85;border-radius:3px 3px 0 0;background:linear-gradient(90deg,#fdfdfd,#e9e8e6)"></div>
<div class="a" style="left:1405.5px;top:514px;width:0;height:0;border-left:3px solid transparent;border-right:3px solid transparent;border-bottom:3px solid #111"></div>
<div class="a" style="left:1401px;top:597px;width:15px;height:242px;box-sizing:border-box;border:1px solid #4f7fbf;background:linear-gradient(90deg,#a9c6ea,#94b5e0)"></div>
<div class="a" style="left:1406px;top:714px;width:5px;height:1px;background:#5c78a4;box-shadow:0 3px 0 #5c78a4,0 6px 0 #5c78a4"></div>
<div class="a" style="left:1401px;top:839px;width:15px;height:15px;box-sizing:border-box;border:1px solid #8d8a85;border-radius:0 0 3px 3px;background:linear-gradient(90deg,#fdfdfd,#e9e8e6)"></div>
<div class="a" style="left:1405.5px;top:845px;width:0;height:0;border-left:3px solid transparent;border-right:3px solid transparent;border-top:3px solid #9a9794"></div>
<!-- resize grip -->
<svg style="left:1417px;top:853px" width="12" height="12" viewBox="0 0 12 12"><g stroke="#8a8a8a" stroke-width="1" stroke-dasharray="1.4 1.4"><line x1="11" y1="2" x2="2" y2="11"></line><line x1="11" y1="5" x2="5" y2="11"></line><line x1="11" y1="8" x2="8" y2="11"></line></g></svg>
<!-- cursor -->
<svg style="left:1281px;top:767px" width="14" height="22" viewBox="0 0 14 22"><path d="M1.6 2.4 L1.6 19 L5.4 15.4 L8 20.4 Q9.4 20.8 10.2 19.4 L7.8 14.2 L12.6 13.6 Z" fill="#fff" stroke="#000" stroke-width="1.2" stroke-linejoin="miter"></path></svg>



</body></html>
